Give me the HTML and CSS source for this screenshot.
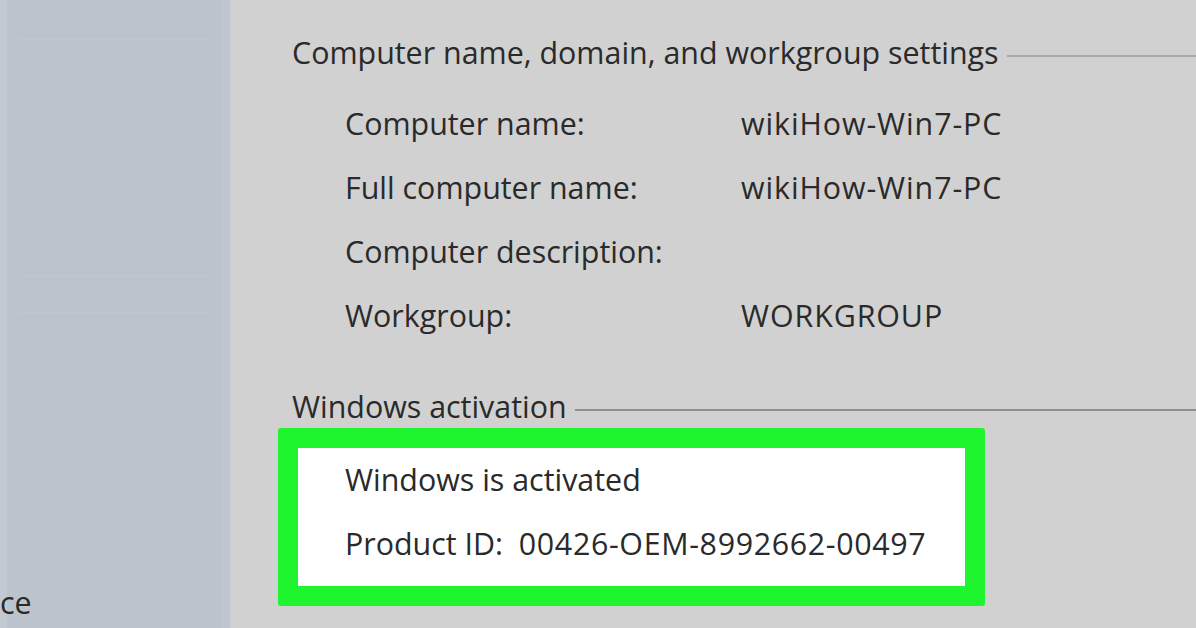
FILE: index.html
```html
<!DOCTYPE html>
<html>
<head>
<meta charset="utf-8">
<link rel="stylesheet" href="styles.css">
</head>
<body>
<div class="window">
  <aside class="sidebar">
    <div class="side-rule r1"></div>
    <div class="side-rule r2"></div>
    <div class="side-rule r3"></div>
    <div class="side-spacer"></div>
    <div class="side-link">ce</div>
  </aside>
  <main class="main">
    <section class="group">
      <div class="group-title"><span>Computer name, domain, and workgroup settings</span><i class="rule"></i></div>
      <div class="rows">
        <div class="row"><span class="label">Computer name:</span><span class="value">wikiHow-Win7-PC</span></div>
        <div class="row"><span class="label">Full computer name:</span><span class="value">wikiHow-Win7-PC</span></div>
        <div class="row"><span class="label">Computer description:</span><span class="value"></span></div>
        <div class="row"><span class="label">Workgroup:</span><span class="value">WORKGROUP</span></div>
      </div>
    </section>
    <section class="group activation">
      <div class="group-title"><span>Windows activation</span><i class="rule dark"></i></div>
      <div class="highlight">
        <div class="hl-inner">
          <div class="row"><span>Windows is activated</span></div>
          <div class="row"><span>Product ID:&nbsp; <span class="num">00426-OEM-8992662-00497</span></span></div>
        </div>
      </div>
    </section>
  </main>
</div>
</body>
</html>
```
FILE: styles.css
```css
html, body {
  margin: 0;
  padding: 0;
  height: 100%;
  overflow: hidden;
}
body {
  font-family: "Open Sans", "Noto Sans", "DejaVu Sans", sans-serif;
  color: #2a2a2a;
  font-size: 30.4px;
}
.window {
  display: flex;
  width: 1196px;
  height: 628px;
  background: #d1d1d1;
}
.sidebar {
  width: 230px;
  flex: none;
  background: linear-gradient(to right, #c3c9d2 0, #c3c9d2 7px, #bcc3cd 7px, #bcc3cd 222px, #c0c6cf 222px);
  display: flex;
  flex-direction: column;
  overflow: hidden;
}
.side-rule {
  height: 1px;
  background: #c1c7d0;
  margin-left: 18px;
  margin-right: 18px;
}
.r1 { margin-top: 39px; }
.r2 { margin-top: 235px; }
.r3 { margin-top: 36px; }
.side-spacer { flex: 1; }
.side-link {
  white-space: nowrap;
  line-height: 30px;
  margin-bottom: 10px;
  margin-left: 0;
  color: #2a2a2a;
}
.main {
  flex: 1;
  padding-left: 62px;
  padding-top: 33px;
  box-sizing: border-box;
}
.group-title {
  display: flex;
  align-items: center;
  white-space: nowrap;
  line-height: 40px;
}
.rule {
  flex: 1;
  height: 2px;
  background: #a8a8a8;
  margin-left: 8px;
  margin-top: 6px;
}
.rule.dark {
  background: #8e8e8e;
}
.rows {
  padding-left: 53px;
  padding-top: 19px;
}
.row {
  display: flex;
  line-height: 64px;
  white-space: nowrap;
}
.label {
  width: 396px;
  flex: none;
}
.value {
  letter-spacing: 0.9px;
}
.num {
  letter-spacing: 0.65px;
}
.activation {
  margin-top: 39px;
}
.highlight {
  margin-left: -14px;
  margin-top: 1px;
  width: 707px;
  box-sizing: border-box;
  border: 20px solid #1ff52e;
  border-radius: 3px;
  background: #ffffff;
}
.hl-inner {
  padding: 0 0 0 47px;
  height: 138px;
  display: flex;
  flex-direction: column;
}
```
